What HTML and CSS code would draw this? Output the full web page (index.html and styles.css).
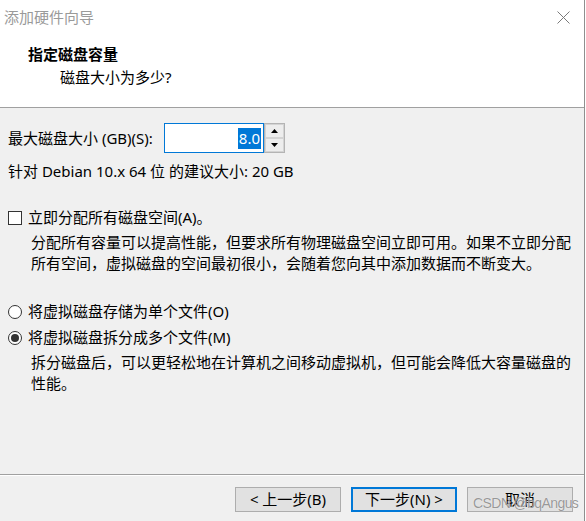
FILE: index.html
```html
<!DOCTYPE html>
<html lang="zh-CN">
<head>
<meta charset="utf-8">
<title>添加硬件向导</title>
<link rel="stylesheet" href="styles.css">
</head>
<body>
<div class="window">
  <div class="header">
    <div class="titlebar">
      <span class="title">添加硬件向导</span>
      <svg class="close" width="13" height="13" viewBox="0 0 13 13"><path d="M0.5 0.5 L12.5 12.5 M12.5 0.5 L0.5 12.5" stroke="#7a7a7a" stroke-width="1" fill="none"/></svg>
    </div>
    <div class="heading">指定磁盘容量</div>
    <div class="subheading">磁盘大小为多少?</div>
  </div>
  <div class="content">
    <div class="size-row">
      <label class="size-label">最大磁盘大小 (GB)(S):</label>
      <div class="spin-input"><span class="sel">8.0</span></div>
      <div class="spinner">
        <div class="spin-btn"><svg width="7" height="4" viewBox="0 0 7 4"><path d="M3.5 0 L7 4 L0 4 Z" fill="#000"/></svg></div>
        <div class="spin-btn"><svg width="7" height="4" viewBox="0 0 7 4"><path d="M0 0 L7 0 L3.5 4 Z" fill="#000"/></svg></div>
      </div>
    </div>
    <div class="hint">针对 Debian 10.x 64 位 的建议大小: 20 GB</div>
    <div class="option option-check"><span class="checkbox"></span><span>立即分配所有磁盘空间(A)。</span></div>
    <p class="desc">分配所有容量可以提高性能，但要求所有物理磁盘空间立即可用。如果不立即分配所有空间，虚拟磁盘的空间最初很小，会随着您向其中添加数据而不断变大。</p>
    <div class="option option-radio-first"><span class="radio"></span><span>将虚拟磁盘存储为单个文件(O)</span></div>
    <div class="option option-radio"><span class="radio checked"></span><span>将虚拟磁盘拆分成多个文件(M)</span></div>
    <p class="desc">拆分磁盘后，可以更轻松地在计算机之间移动虚拟机，但可能会降低大容量磁盘的性能。</p>
  </div>
  <div class="footer">
    <button class="btn">&lt; 上一步(B)</button>
    <button class="btn btn-default">下一步(N) &gt;</button>
    <button class="btn">取消</button>
  </div>
  <div class="watermark">CSDN @bqAngus</div>
</div>
</body>
</html>
```
FILE: styles.css
```css
* { box-sizing: border-box; }
html, body { margin: 0; padding: 0; background: #ffffff; }
body {
  width: 586px;
  height: 521px;
  overflow: hidden;
  font-family: "Noto Sans", "Noto Sans CJK SC", sans-serif;
  font-size: 15px;
  color: #000;
}
.window {
  position: relative;
  width: 585px;
  height: 521px;
  border-right: 1px solid #8f8f8f;
  display: flex;
  flex-direction: column;
  background: #f0f0f0;
}
.header {
  background: #ffffff;
  height: 108px;
  border-bottom: 1px solid #a0a0a0;
  flex: none;
}
.titlebar {
  height: 34px;
  display: flex;
  align-items: center;
  justify-content: space-between;
  padding-left: 4px;
  padding-right: 14px;
}
.title { color: #9a9a9a; line-height: 20px; }
.close { display: block; }
.heading {
  font-weight: bold;
  line-height: 21px;
  margin-top: 10px;
  padding-left: 28px;
}
.subheading {
  line-height: 21px;
  margin-top: 2px;
  padding-left: 60px;
}
.content {
  flex: 1;
  padding: 15px 0 0 8px;
}
.size-row {
  display: flex;
  align-items: center;
  height: 30px;
}
.size-label { width: 156px; line-height: 21px; }
.spin-input {
  width: 100px;
  height: 30px;
  border: 1px solid #0078d7;
  background: #fff;
  display: flex;
  align-items: center;
  justify-content: flex-end;
  padding-right: 2px;
}
.sel {
  background: #0078d7;
  color: #fff;
  line-height: 21px;
  padding: 0 1px;
}
.spinner {
  width: 21px;
  height: 30px;
  display: flex;
  flex-direction: column;
  border: 1px solid #b4b4b4;
  background: #fff;
}
.spin-btn {
  flex: 1;
  display: flex;
  align-items: center;
  justify-content: center;
  background: #ededed;
  border: 1px solid #d4d4d4;
}
.spin-btn svg { display: block; }
.hint { line-height: 21px; margin-top: 8px; }
.option {
  display: flex;
  align-items: center;
  line-height: 21px;
  gap: 6px;
}
.option-check { margin-top: 25px; }
.option-radio-first { margin-top: 27px; }
.option-radio { margin-top: 5px; }
.checkbox {
  width: 14px;
  height: 14px;
  border: 1px solid #333;
  background: #fff;
  flex: none;
}
.radio {
  width: 14px;
  height: 14px;
  border: 1px solid #333;
  border-radius: 50%;
  background: #fff;
  flex: none;
  display: flex;
  align-items: center;
  justify-content: center;
}
.radio.checked::after {
  content: "";
  width: 8px;
  height: 8px;
  border-radius: 50%;
  background: #333;
}
.desc {
  margin: 4px 0 0 23px;
  width: 545px;
  line-height: 21px;
}
.footer {
  flex: none;
  height: 47px;
  border-top: 1px solid #a0a0a0;
  box-shadow: inset 0 1px 0 #ffffff;
  display: flex;
  justify-content: flex-end;
  align-items: flex-start;
  gap: 10px;
  padding: 12px 11px 0 0;
}
.btn {
  width: 106px;
  height: 25px;
  border: 1px solid #adadad;
  background: #e1e1e1;
  font-family: inherit;
  font-size: 15px;
  color: #000;
  padding: 0 0 2px;
  line-height: 20px;
}
.btn-default { border: 2px solid #0078d7; }
.watermark {
  position: absolute;
  left: 473px;
  top: 495px;
  font-family: "Liberation Sans", sans-serif;
  font-size: 14px;
  letter-spacing: -0.6px;
  line-height: 16px;
  color: rgba(120, 120, 120, 0.75);
  text-shadow: 0 0 1px rgba(255, 255, 255, 0.9);
}
```
